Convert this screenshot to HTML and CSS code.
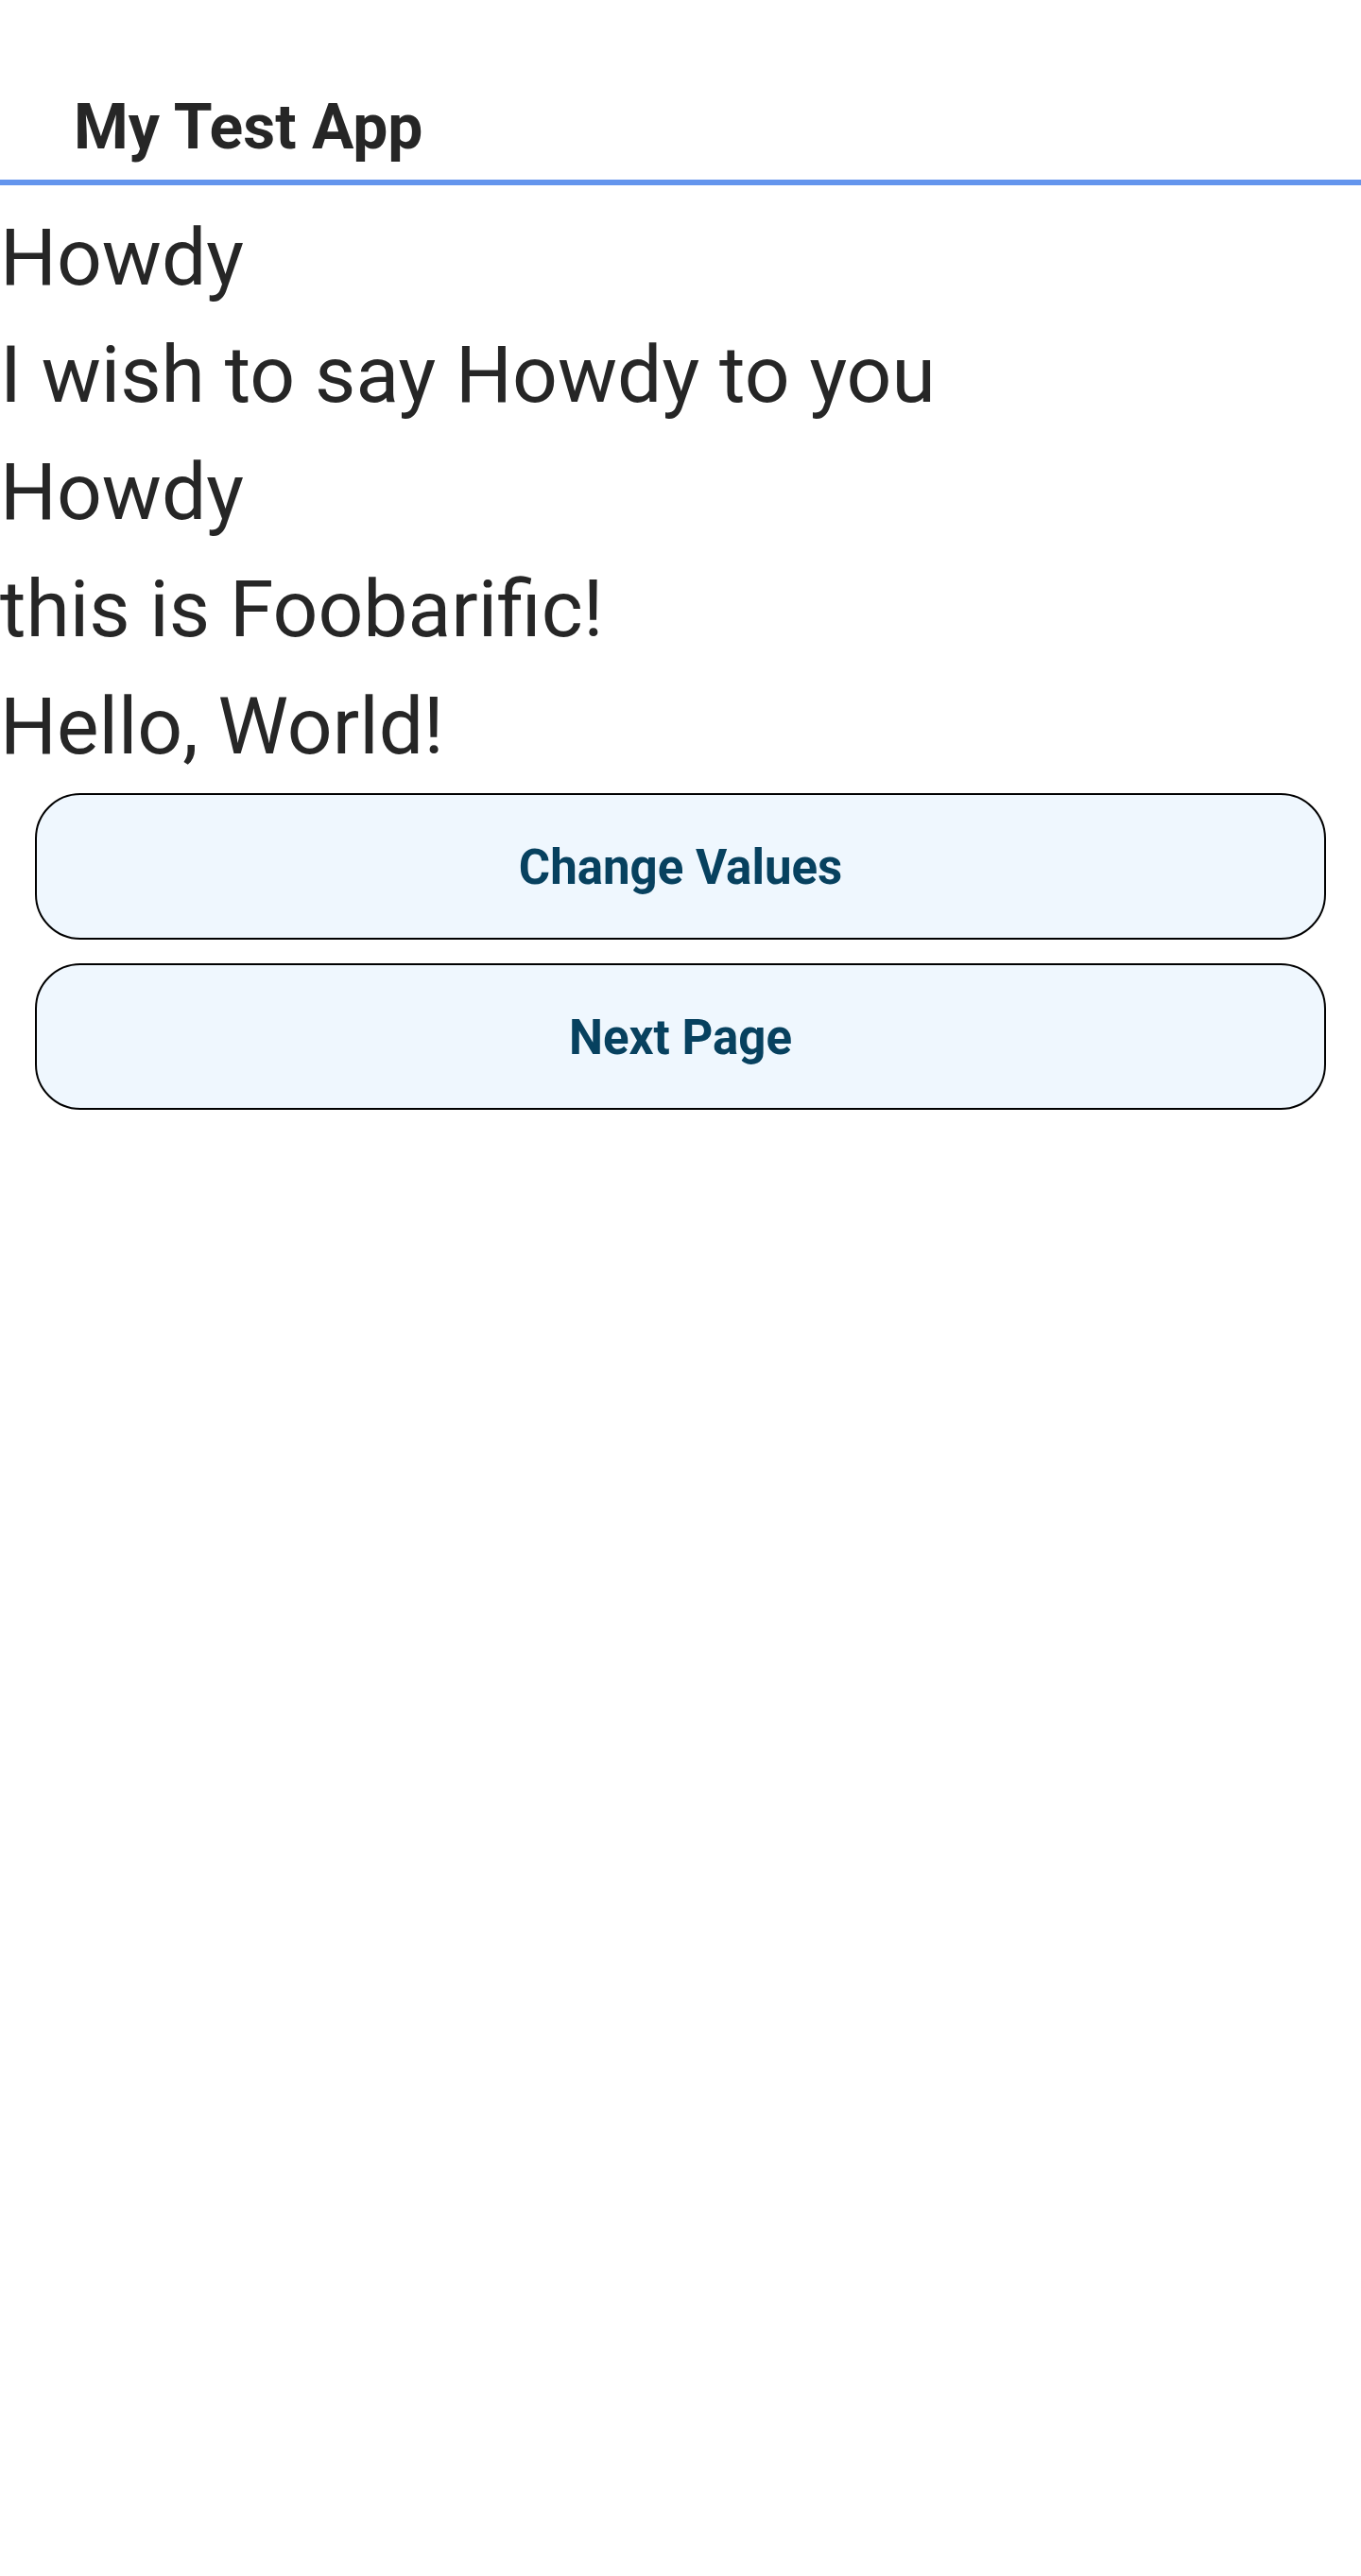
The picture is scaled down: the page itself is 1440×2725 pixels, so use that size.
FILE: index.html
```html
<!DOCTYPE html>
<html lang="en">
<head>
<meta charset="utf-8">
<title>My Test App</title>
<link rel="stylesheet" href="styles.css">
</head>
<body>
<header class="app-bar">
  <h1 class="app-title">My Test App</h1>
</header>
<main class="content">
  <p class="line">Howdy</p>
  <p class="line">I wish to say Howdy to you</p>
  <p class="line">Howdy</p>
  <p class="line">this is Foobarific!</p>
  <p class="line">Hello, World!</p>
  <div class="actions">
    <button class="btn" type="button">Change Values</button>
    <button class="btn" type="button">Next Page</button>
  </div>
</main>
</body>
</html>
```

FILE: styles.css
```css
html, body {
  margin: 0;
  padding: 0;
  background: #ffffff;
}

body {
  font-family: Roboto, "Liberation Sans", sans-serif;
  color: #262626;
}

.app-bar {
  box-sizing: border-box;
  height: 196px;
  padding: 96px 0 0 78px;
  border-bottom: 6px solid #6495ed;
}

.app-title {
  margin: 0;
  font-size: 66px;
  font-weight: 700;
  line-height: normal;
  color: #262626;
}

.content {
  display: flex;
  flex-direction: column;
  padding-top: 27px;
}

.line {
  margin: 0 0 24px 0;
  font-size: 84px;
  line-height: 100px;
  font-weight: 400;
}

.line:last-of-type {
  margin-bottom: 20px;
}

.actions {
  display: flex;
  flex-direction: column;
  gap: 25px;
  padding: 0 37px;
}

.btn {
  box-sizing: border-box;
  height: 155px;
  width: 100%;
  padding-top: 2px;
  border: 2px solid #000000;
  border-radius: 48px;
  background: #eff7fe;
  font-family: Roboto, "Liberation Sans", sans-serif;
  font-size: 51px;
  font-weight: 700;
  color: #07415f;
  cursor: pointer;
}
```
